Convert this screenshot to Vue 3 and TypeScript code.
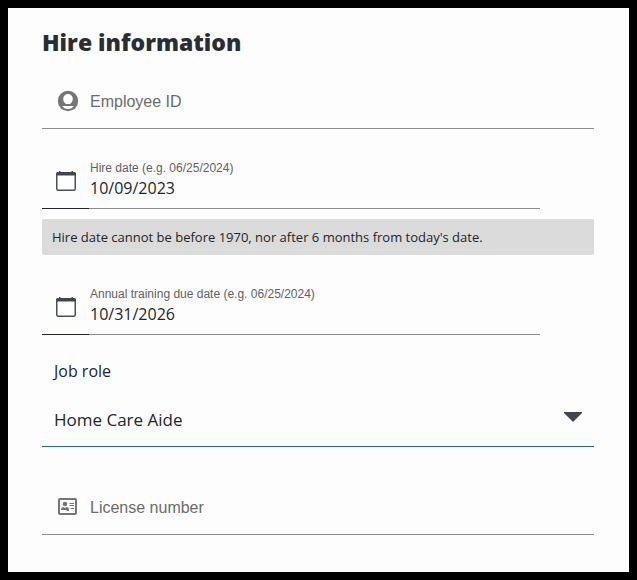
<script setup lang="ts">
import { ref } from 'vue'

interface DateField {
  id: string
  label: string
  value: string
  hint?: string
}

const employeeId = ref('')
const licenseNumber = ref('')
const jobRole = ref('Home Care Aide')
const jobRoles: string[] = ['Home Care Aide']
const dateFields = ref<DateField[]>([
  {
    id: 'hire-date',
    label: 'Hire date (e.g. 06/25/2024)',
    value: '10/09/2023',
    hint: "Hire date cannot be before 1970, nor after 6 months from today's date.",
  },
  {
    id: 'training-date',
    label: 'Annual training due date (e.g. 06/25/2024)',
    value: '10/31/2026',
  },
])
</script>

<template>
  <main class="panel">
    <form class="form" @submit.prevent>
      <h1 class="title">Hire information</h1>

      <div class="text-field">
        <svg class="icon" viewBox="0 0 24 24" aria-hidden="true">
          <circle cx="12" cy="12" r="10.200" fill="#757575" />
          <path
            fill="#fdfdfd"
            d="M12 5a4.800 4.800 0 0 1 4.800 5c0 2.200-1.200 4-2.800 5h-4c-1.600-1-2.800-2.800-2.800-5A4.800 4.800 0 0 1 12 5zM6 17h12c-1.400 1.900-3.500 2.900-6 2.900S7.400 18.900 6 17z"
          />
        </svg>
        <input
          v-model="employeeId"
          class="input"
          type="text"
          placeholder="Employee ID"
          aria-label="Employee ID"
        />
      </div>

      <div v-for="field in dateFields" :key="field.id" class="date-group">
        <div class="date-field">
          <button class="calendar" type="button" :aria-label="field.label">
            <svg class="calendar-icon" viewBox="0 0 20 20" aria-hidden="true">
              <rect x="0.750" y="2" width="18.500" height="17.250" rx="1.500" fill="#fff" stroke="#4a505b" stroke-width="1.500" />
              <path d="M0 4.500V3q0-2 2-2h1V0h1.500v1h11V0H17v1h1q2 0 2 2v1.500z" fill="#3f4652" />
            </svg>
          </button>
          <div class="date-body">
            <label class="date-label" :for="field.id">{{ field.label }}</label>
            <input :id="field.id" v-model="field.value" class="date-input" type="text" />
          </div>
        </div>
        <p v-if="field.hint" class="hint">{{ field.hint }}</p>
      </div>

      <div class="role-group">
        <label class="role-label" for="job-role">Job role</label>
        <div class="role-field">
          <select id="job-role" v-model="jobRole" class="role-select">
            <option v-for="role in jobRoles" :key="role" :value="role">{{ role }}</option>
          </select>
          <svg class="arrow" viewBox="0 0 18 10" aria-hidden="true">
            <path d="M0 0h18v1l-9 9-9-9z" fill="#3f4652" />
          </svg>
        </div>
      </div>

      <div class="text-field">
        <svg class="icon" viewBox="0 0 24 24" aria-hidden="true">
          <rect x="3" y="4" width="17" height="15" rx="1" fill="none" stroke="#757575" stroke-width="2" />
          <circle cx="9" cy="9" r="2.300" fill="#757575" />
          <path d="M5 15q0-3 2.500-3L9 13l1.500-1q2.500 0 2.500 3v1h-2l-1-1z" fill="#757575" />
          <path d="M13.500 8.500h4.500M13.500 10.500h4.500M14.500 13.500h3.500" stroke="#757575" />
        </svg>
        <input
          v-model="licenseNumber"
          class="input"
          type="text"
          placeholder="License number"
          aria-label="License number"
        />
      </div>
    </form>
  </main>
</template>

<style>
body {
  background: #000;
}
</style>

<style scoped>
.panel {
  box-sizing: border-box;
  min-height: 100vh;
  padding: 20px 35px 20px 34px;
  border: 8px solid #000;
  background: #fdfdfd;
  color: #212529;
  font-family: 'Open Sans', 'Noto Sans', sans-serif;
}

.title {
  margin: 0 0 18px;
  color: #2a2d34;
  font-size: 23px;
  font-weight: 800;
  line-height: 28px;
}

input,
select,
button {
  min-width: 0;
  margin: 0;
  padding: 0;
  border: 0;
  border-radius: 0;
  outline: none;
  background: none;
  color: inherit;
  font-family: inherit;
}

.text-field {
  display: flex;
  align-items: center;
  gap: 10px;
  box-sizing: border-box;
  height: 55px;
  padding-left: 14px;
  border-bottom: 1px solid #8c8c8c;
}

.icon {
  flex: none;
  width: 24px;
  height: 24px;
}

.input {
  flex: 1;
  height: 40px;
  padding-top: 2px;
  font-family: 'Liberation Sans', Arial, sans-serif;
  font-size: 16px;
}

.input::placeholder {
  color: #6b6b6b;
  opacity: 1;
}

.date-group {
  display: flex;
  flex-direction: column;
  gap: 10px;
  margin-top: 25px;
}

.date-field {
  display: flex;
  height: 55px;
  margin-right: 54px;
}

.calendar {
  box-sizing: border-box;
  display: flex;
  flex: none;
  align-items: center;
  width: 47px;
  padding-left: 14px;
  border-bottom: 1px solid #212529;
}

.calendar-icon {
  width: 20px;
  height: 20px;
}

.date-body {
  display: flex;
  flex: 1;
  flex-direction: column;
  padding: 6px 0 0 1px;
  border-bottom: 1px solid #8c8c8c;
}

.date-label {
  color: #616161;
  font-family: 'Liberation Sans', Arial, sans-serif;
  font-size: 12px;
  line-height: 16px;
}

.date-input {
  height: 24px;
  font-size: 16px;
}

.hint {
  margin: 0;
  padding: 9px 10px;
  border-radius: 2px;
  background: #dbdbdb;
  font-size: 13px;
  line-height: 18px;
}

.role-group {
  display: flex;
  flex-direction: column;
  gap: 11px;
  margin: 26px 0 33px;
}

.role-label {
  padding-left: 12px;
  font-size: 16px;
  line-height: 20px;
}

.role-field {
  display: grid;
  align-items: center;
}

.role-select {
  grid-area: 1 / 1;
  box-sizing: border-box;
  width: 100%;
  height: 55px;
  padding: 0 40px 0 12px;
  border-bottom: 1px solid #1f6f80;
  appearance: none;
  font-size: 17px;
}

.arrow {
  grid-area: 1 / 1;
  justify-self: end;
  width: 18px;
  height: 10px;
  margin: 0 12px 6px 0;
  pointer-events: none;
}
</style>
